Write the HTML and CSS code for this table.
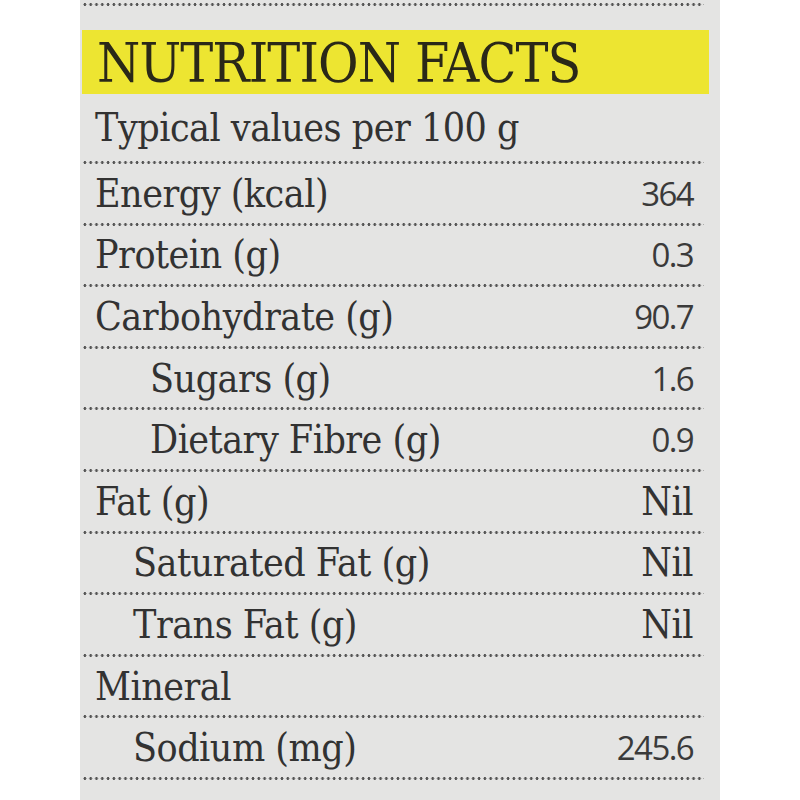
FILE: index.html
```html
<!DOCTYPE html>
<html>
<head>
<meta charset="utf-8">
<link rel="stylesheet" href="styles.css">
</head>
<body>
<div class="panel">
  <div class="dots"></div>
  <div class="title"><span>NUTRITION FACTS</span></div>
  <div class="sub">Typical values per 100 g</div>
  <div class="dots"></div>
  <div class="row"><span class="label">Energy (kcal)</span><span class="val num">364</span></div>
  <div class="dots"></div>
  <div class="row"><span class="label">Protein (g)</span><span class="val num">0.3</span></div>
  <div class="dots"></div>
  <div class="row"><span class="label">Carbohydrate (g)</span><span class="val num">90.7</span></div>
  <div class="dots"></div>
  <div class="row"><span class="label ind2">Sugars (g)</span><span class="val num">1.6</span></div>
  <div class="dots"></div>
  <div class="row"><span class="label ind2">Dietary Fibre (g)</span><span class="val num">0.9</span></div>
  <div class="dots"></div>
  <div class="row"><span class="label">Fat (g)</span><span class="val">Nil</span></div>
  <div class="dots"></div>
  <div class="row"><span class="label ind1">Saturated Fat (g)</span><span class="val">Nil</span></div>
  <div class="dots"></div>
  <div class="row"><span class="label ind1">Trans Fat (g)</span><span class="val">Nil</span></div>
  <div class="dots"></div>
  <div class="row"><span class="label">Mineral</span></div>
  <div class="dots"></div>
  <div class="row"><span class="label ind1">Sodium (mg)</span><span class="val num">245.6</span></div>
  <div class="dots"></div>
</div>
</body>
</html>
```

FILE: styles.css
```css
html, body {
  margin: 0;
  padding: 0;
  background: #ffffff;
}
body {
  width: 800px;
  height: 800px;
  overflow: hidden;
  font-family: "DejaVu Serif", "Liberation Serif", serif;
  font-stretch: condensed;
  color: #323232;
}
.panel {
  margin-left: 80px;
  width: 640px;
  height: 800px;
  background: #e4e4e3;
  padding-top: 3px;
  box-sizing: border-box;
  display: flex;
  flex-direction: column;
}
.dots {
  flex: none;
  height: 3px;
  margin-left: 2px;
  width: 622px;
  background-image: radial-gradient(circle, #555555 1.2px, transparent 1.7px);
  background-size: 5.8px 3px;
  background-repeat: repeat-x;
}
.title {
  flex: none;
  margin-top: 24px;
  margin-left: 2px;
  width: 627px;
  height: 64px;
  background: #ede531;
  display: flex;
  align-items: center;
  padding-left: 15px;
  box-sizing: border-box;
}
.title span {
  font-size: 55px;
  font-weight: 300;
  color: #2a2818;
  letter-spacing: -0.9px;
  line-height: 1;
  padding-top: 3px;
}
.sub {
  flex: none;
  height: 67px;
  display: flex;
  align-items: center;
  padding-left: 15px;
  font-size: 39px;
  letter-spacing: -0.5px;
}
.row {
  flex: none;
  height: 58.6px;
  display: flex;
  align-items: center;
  justify-content: space-between;
  padding-left: 15px;
  width: 613px;
  box-sizing: border-box;
  font-size: 39px;
  letter-spacing: -0.5px;
}
.ind1 { padding-left: 38px; }
.ind2 { padding-left: 55px; }
.val {
  text-align: right;
}
.num {
  font-family: "Open Sans", "Noto Sans", sans-serif;
  font-stretch: normal;
  font-size: 33px;
  font-weight: 400;
  letter-spacing: -1.6px;
  color: #3a3a3a;
}
```
